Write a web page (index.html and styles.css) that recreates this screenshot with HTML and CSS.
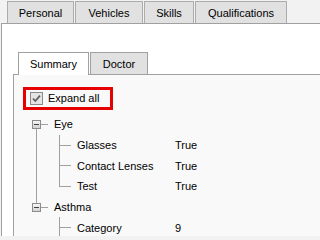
FILE: index.html
```
<!DOCTYPE html>
<html>
<head>
<meta charset="utf-8">
<link rel="stylesheet" href="styles.css">
</head>
<body>
<div class="tabs">
  <div class="tab w-personal">Personal</div>
  <div class="tab w-vehicles">Vehicles</div>
  <div class="tab w-skills">Skills</div>
  <div class="tab w-qual">Qualifications</div>
</div>
<div class="panel">
  <div class="subtabs">
    <div class="subtab active w-summary">Summary</div>
    <div class="subtab w-doctor">Doctor</div>
  </div>
  <div class="subpanel">
    <label class="expand">
      <span class="cb"><svg width="13" height="13" viewBox="0 0 13 13"><rect x="0.5" y="0.5" width="12" height="12" fill="#e4e4e4" stroke="#8a8a8a"/><path d="M3 6.5 L5.3 9 L10 3.6" fill="none" stroke="#5e5e5e" stroke-width="1.7"/></svg></span>
      <span class="exp-label">Expand all</span>
    </label>
    <div class="tree">
      <div class="node">
        <div class="row parent"><span class="box"></span><span class="label">Eye</span></div>
        <div class="children">
          <div class="row child"><span class="clabel">Glasses</span><span class="value">True</span></div>
          <div class="row child"><span class="clabel">Contact Lenses</span><span class="value">True</span></div>
          <div class="row child"><span class="clabel">Test</span><span class="value">True</span></div>
        </div>
      </div>
      <div class="node">
        <div class="row parent"><span class="box"></span><span class="label">Asthma</span></div>
        <div class="children more">
          <div class="row child"><span class="clabel">Category</span><span class="value">9</span></div>
        </div>
      </div>
    </div>
  </div>
</div>
</body>
</html>
```
FILE: styles.css
```
html, body {
  margin: 0;
  height: 100%;
  overflow: hidden;
}
body {
  background: #f2f2f2;
  font: 11px "Liberation Sans", Arial, sans-serif;
  color: #000;
}
.tabs {
  display: flex;
  gap: 1px;
  padding: 1px 0 0 7px;
  height: 22px;
}
.tab {
  box-sizing: border-box;
  height: 22px;
  border: 1px solid #acacac;
  border-bottom: 0;
  background: #e1e1e1;
  display: flex;
  align-items: center;
  justify-content: center;
}
.w-personal { width: 67px; }
.w-vehicles { width: 68px; }
.w-skills { width: 50px; }
.w-qual { width: 92px; }

.panel {
  margin-left: 1px;
  border-top: 1px solid #a0a0a0;
  border-left: 1px solid #a0a0a0;
  background: #fff;
  height: 184px;
  padding: 28px 0 0 11px;
}
.subtabs {
  display: flex;
  gap: 1px;
  padding-left: 5px;
  height: 22px;
  align-items: flex-start;
}
.subtab {
  box-sizing: border-box;
  height: 22px;
  border: 1px solid #a0a0a0;
  border-bottom: 0;
  background: #e1e1e1;
  display: flex;
  align-items: center;
  justify-content: center;
}
.subtab.active {
  background: #fff;
  height: 23px;
  position: relative;
  z-index: 1;
}
.w-summary { width: 71px; }
.w-doctor { width: 58px; }

.subpanel {
  border-top: 1px solid #a0a0a0;
  border-left: 1px solid #a0a0a0;
  background: #f9f9f9;
  height: 149px;
  overflow: hidden;
  padding: 12px 0 0 9px;
}
.expand {
  box-sizing: border-box;
  display: flex;
  align-items: center;
  width: 90px;
  height: 23px;
  border: 3px solid #e60000;
  padding-left: 4px;
}
.cb {
  display: flex;
  width: 13px;
  height: 13px;
}
.exp-label {
  margin-left: 5px;
  padding-bottom: 1px;
}

.tree {
  position: relative;
  margin-top: 4px;
}
.tree::before {
  content: "";
  position: absolute;
  left: 13px;
  top: 10px;
  height: 83px;
  width: 1px;
  background: #a0a0a0;
}
.row {
  position: relative;
  display: flex;
  align-items: center;
  height: 20.7px;
}
.box {
  position: relative;
  z-index: 1;
  box-sizing: border-box;
  margin-left: 9px;
  width: 9px;
  height: 9px;
  border: 1px solid #8c8c8c;
  background: linear-gradient(#f6f6f6, #d2d2d2);
}
.box::before {
  content: "";
  position: absolute;
  left: 1px;
  top: 3px;
  width: 5px;
  height: 1px;
  background: #404040;
}
.parent::after {
  content: "";
  position: absolute;
  left: 18px;
  top: 10px;
  width: 7px;
  height: 1px;
  background: #a0a0a0;
}
.label {
  margin-left: 13px;
}
.children {
  position: relative;
}
.children::before {
  content: "";
  position: absolute;
  left: 36px;
  top: 0;
  bottom: 10px;
  width: 1px;
  background: #a0a0a0;
}
.children.more::before {
  bottom: -20px;
}
.child {
  padding-left: 54px;
}
.child::before {
  content: "";
  position: absolute;
  left: 37px;
  top: 10px;
  width: 11px;
  height: 1px;
  background: #a0a0a0;
}
.clabel {
  width: 98px;
}
```
